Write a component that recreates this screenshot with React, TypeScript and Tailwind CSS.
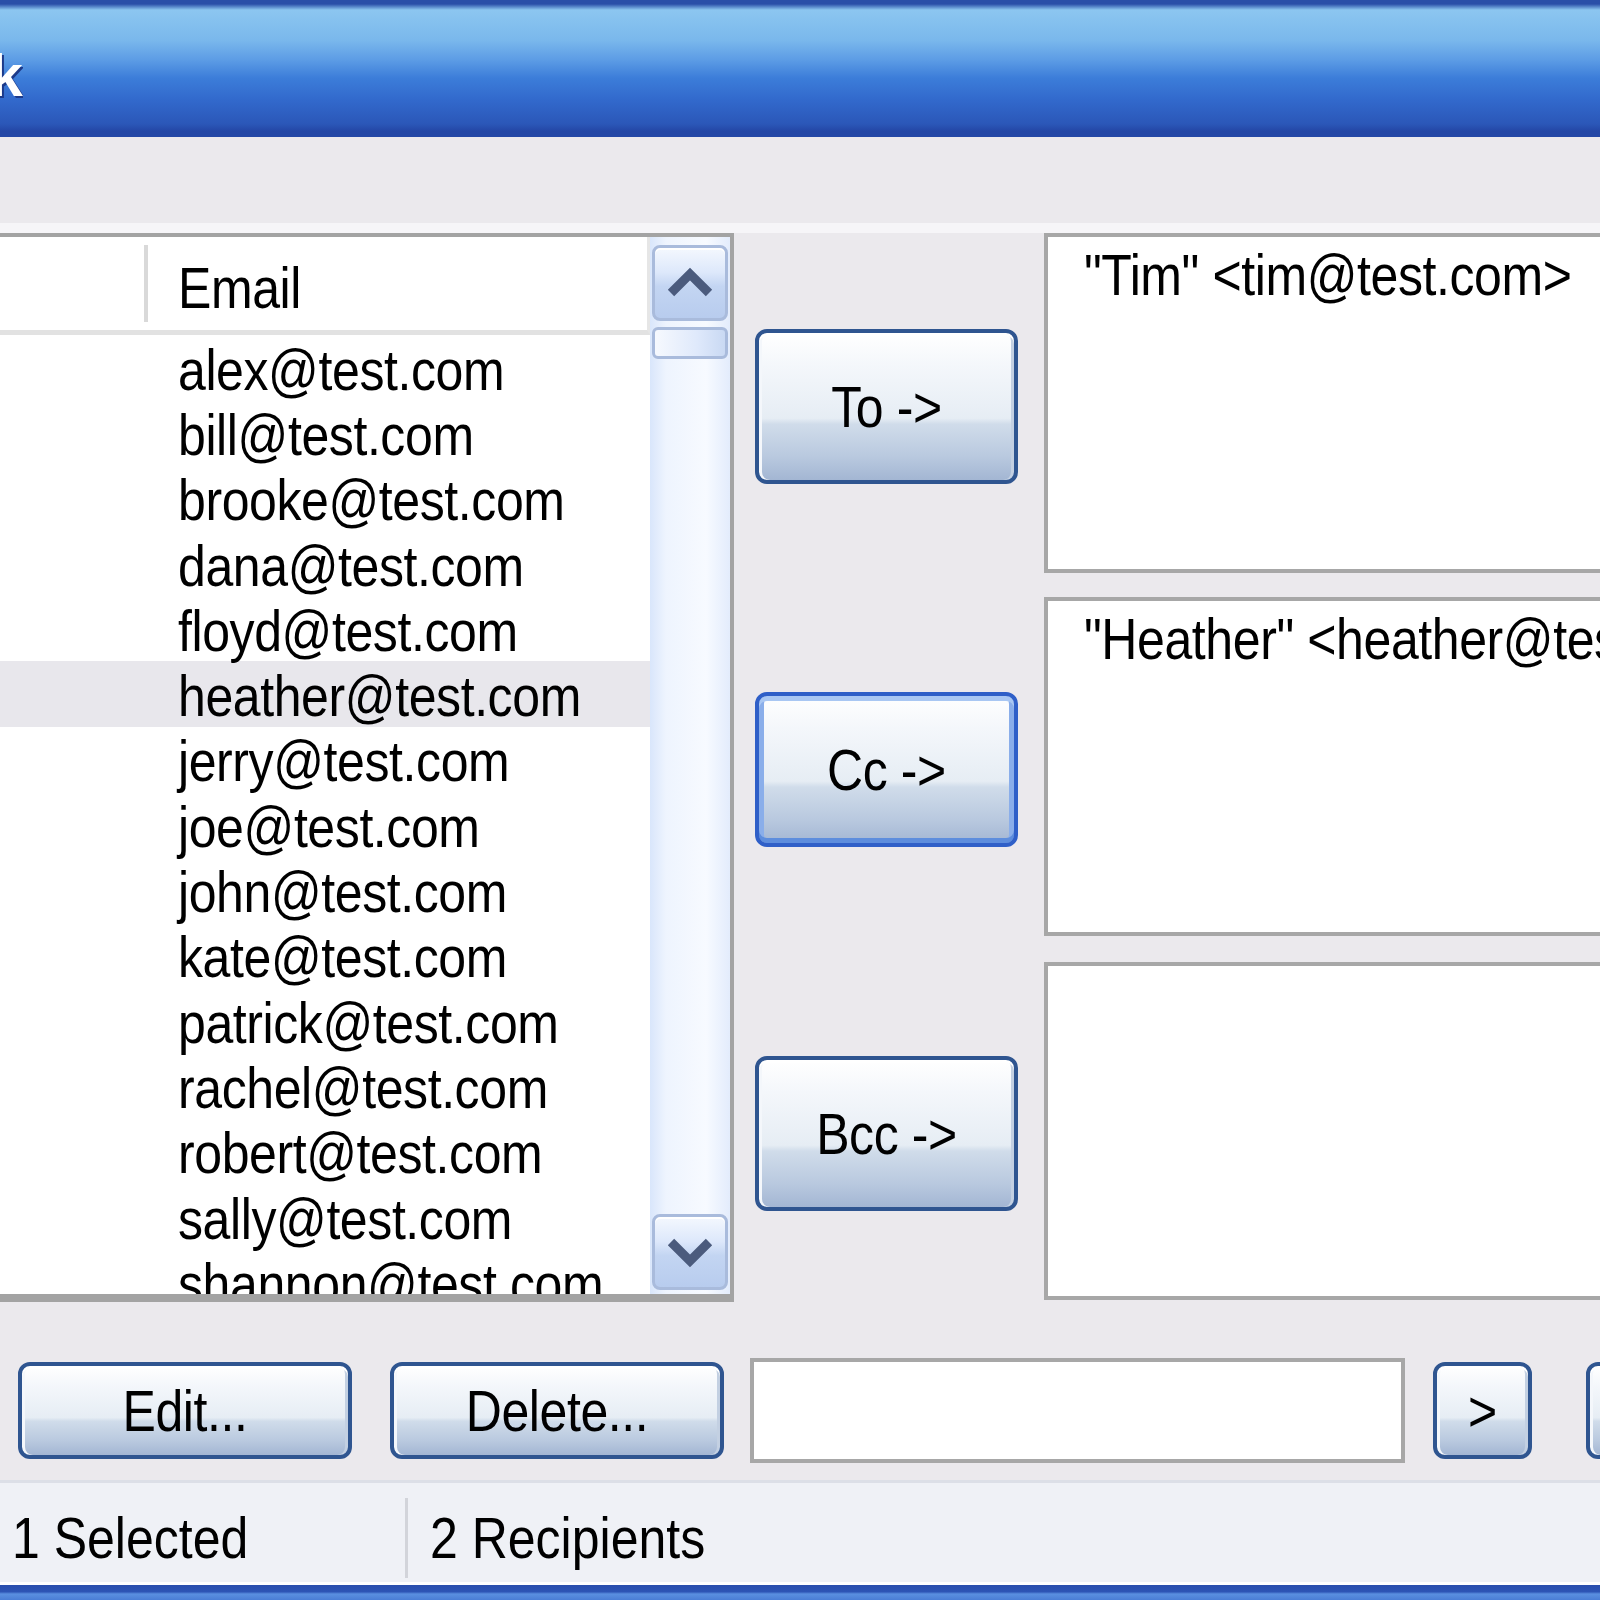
import React from "react";

const emails = [
  "alex@test.com",
  "bill@test.com",
  "brooke@test.com",
  "dana@test.com",
  "floyd@test.com",
  "heather@test.com",
  "jerry@test.com",
  "joe@test.com",
  "john@test.com",
  "kate@test.com",
  "patrick@test.com",
  "rachel@test.com",
  "robert@test.com",
  "sally@test.com",
  "shannon@test.com",
];

// the pixel font of the original is tall and narrow, so stretch the text a bit
function Txt({ children }: { children: React.ReactNode }) {
  return <span className="inline-block scale-y-[1.16] whitespace-nowrap">{children}</span>;
}

function XpButton({
  label,
  className = "",
  focused = false,
}: {
  label: string;
  className?: string;
  focused?: boolean;
}) {
  const ring = focused
    ? "border-[#2f5fc8] shadow-[inset_0_5px_0_#a9c7f3,inset_0_-5px_0_#5d8ddd,inset_5px_0_0_#8aaeea,inset_-5px_0_0_#8aaeea]"
    : "border-[#2f5590] shadow-[inset_0_3px_0_#ffffff,inset_3px_0_0_#f4f7fb,inset_-3px_0_0_#c3d0e2]";
  return (
    <div
      className={`flex shrink-0 items-center justify-center rounded-[12px] border-[4px] ${ring} bg-[linear-gradient(to_bottom,#ffffff_0%,#f4f7fb_22%,#e6edf4_58%,#d0dcea_62%,#b9c9df_84%,#a3b6d3_100%)] text-[50px] leading-none tracking-[-0.4px] text-black ${className}`}
    >
      {label && <Txt>{label}</Txt>}
    </div>
  );
}

function Chevron({ down = false }: { down?: boolean }) {
  return (
    <svg width="46" height="32" viewBox="0 0 46 32">
      <polyline
        points={down ? "4,6 23,25 42,6" : "4,26 23,7 42,26"}
        fill="none"
        stroke="#4b5b7d"
        strokeWidth="9"
        strokeLinejoin="miter"
      />
    </svg>
  );
}

function ScrollButton({ down = false }: { down?: boolean }) {
  return (
    <div className="flex h-[76px] items-center justify-center rounded-[8px] border-[3px] border-[#a9bbdc] bg-[linear-gradient(to_bottom,#f4f8fe_0%,#dde8fb_35%,#c3d5f2_55%,#b8ccee_100%)] shadow-[inset_0_2px_0_#ffffff]">
      <Chevron down={down} />
    </div>
  );
}

function AddressList() {
  return (
    <div className="-ml-[20px] flex h-[1069px] w-[754px] shrink-0 border-[4px] border-b-[8px] border-[#a3a3a3] bg-white">
      <div className="flex w-[666px] flex-col overflow-hidden">
        <div className="flex h-[98px] shrink-0 border-b-[5px] border-[#e2e2e2] border-r-[3px] border-r-[#e6e6e6]">
          <div className="w-[164px] shrink-0 py-[8px]">
            <div className="ml-auto h-full w-[4px] bg-[#d9d9d9]" />
          </div>
          <div className="flex items-center pl-[30px] pt-[8px] text-[50px] leading-none tracking-[-0.4px]">
            <Txt>Email</Txt>
          </div>
        </div>
        {emails.map((email, i) => (
          <div
            key={email}
            className={`flex h-[65.3px] shrink-0 items-center pl-[194px] pt-[4px] text-[50px] leading-none tracking-[-0.4px] ${i === 5 ? "bg-[#e8e7ec]" : ""}`}
          >
            <Txt>{email}</Txt>
          </div>
        ))}
      </div>
      <div className="flex w-[80px] flex-col bg-[linear-gradient(to_right,#d9e6fb_0%,#eef4fe_20%,#f7faff_70%,#e3ecfc_100%)] px-[2px] pb-[4px] pt-[8px]">
        <ScrollButton />
        <div className="mt-[6px] h-[32px] rounded-[6px] border-[3px] border-[#a9bbdc] bg-[linear-gradient(to_right,#f6f9fe_0%,#dfe9fb_60%,#c9d9f3_100%)]" />
        <div className="flex-1" />
        <ScrollButton down />
      </div>
    </div>
  );
}

function RecipientBox({ text, className = "" }: { text?: string; className?: string }) {
  return (
    <div
      className={`w-[620px] shrink-0 border-[4px] border-[#a7a7a7] bg-white pl-[36px] pt-[8px] text-[50px] leading-[60px] tracking-[-0.4px] whitespace-nowrap ${className}`}
    >
      {text && <Txt>{text}</Txt>}
    </div>
  );
}

export default function App() {
  return (
    <div className="flex h-[1600px] w-[1600px] flex-col overflow-hidden bg-[#ebe9ed] font-['Liberation_Sans',Arial,sans-serif] text-black">
      {/* title bar */}
      <div className="flex h-[137px] shrink-0 items-center pt-[14px] bg-[linear-gradient(to_bottom,#2a4ea8_0px,#2a4ea8_4px,#8cc6f0_10px,#7ab8ec_40px,#5c9ce5_60px,#3c7dd9_78px,#3269cc_100px,#2b57b8_124px,#2447a6_131px,#2447a6_137px)]">
        <div className="flex w-[23px] justify-end overflow-hidden">
          <span className="whitespace-nowrap text-[60px] font-bold leading-none text-white [text-shadow:2px_2px_0_#1c3a8a]">
            Address Book
          </span>
        </div>
      </div>

      {/* toolbar strip */}
      <div className="h-[96px] shrink-0 border-b-[10px] border-[#f6f5f8] bg-[#ebe9ed]" />

      {/* main area */}
      <div className="flex shrink-0">
        <AddressList />
        <div className="ml-[21px] flex w-[263px] shrink-0 flex-col pt-[96px]">
          <XpButton label="To ->" className="h-[155px]" />
          <XpButton label="Cc ->" className="mt-[208px] h-[155px]" focused />
          <XpButton label="Bcc ->" className="mt-[209px] h-[155px]" />
        </div>
        <div className="ml-[26px] flex flex-col">
          <RecipientBox text={'"Tim" <tim@test.com>'} className="h-[340px]" />
          <RecipientBox text={'"Heather" <heather@test.com>'} className="mt-[24px] h-[339px]" />
          <RecipientBox className="mt-[26px] h-[338px]" />
        </div>
      </div>

      {/* bottom controls */}
      <div className="mt-[56px] flex h-[105px] shrink-0 items-center">
        <XpButton label="Edit..." className="ml-[18px] h-[97px] w-[334px]" />
        <XpButton label="Delete..." className="ml-[38px] h-[97px] w-[334px]" />
        <div className="ml-[26px] h-[105px] w-[655px] shrink-0 border-[4px] border-[#a7a7a7] bg-white" />
        <XpButton label=">" className="ml-[28px] h-[97px] w-[99px]" />
        <XpButton label="" className="ml-[54px] h-[97px] w-[99px]" />
      </div>

      {/* status bar */}
      <div className="mt-[17px] flex h-[102px] shrink-0 items-center border-t-[3px] border-[#dcdfe7] bg-[#eff1f6] pt-[10px] text-[50px] leading-none">
        <div className="w-[405px] shrink-0 pl-[12px]">
          <Txt>1 Selected</Txt>
        </div>
        <div className="h-[80px] w-[3px] shrink-0 bg-[#d2d4da]" />
        <div className="pl-[22px]">
          <Txt>2 Recipients</Txt>
        </div>
      </div>
      <div className="h-[3px] shrink-0 bg-white" />
      <div className="h-[15px] shrink-0 bg-[linear-gradient(to_bottom,#2a4ead_0%,#2d54b5_45%,#5a8fe0_60%,#4a7dd6_100%)]" />
    </div>
  );
}
